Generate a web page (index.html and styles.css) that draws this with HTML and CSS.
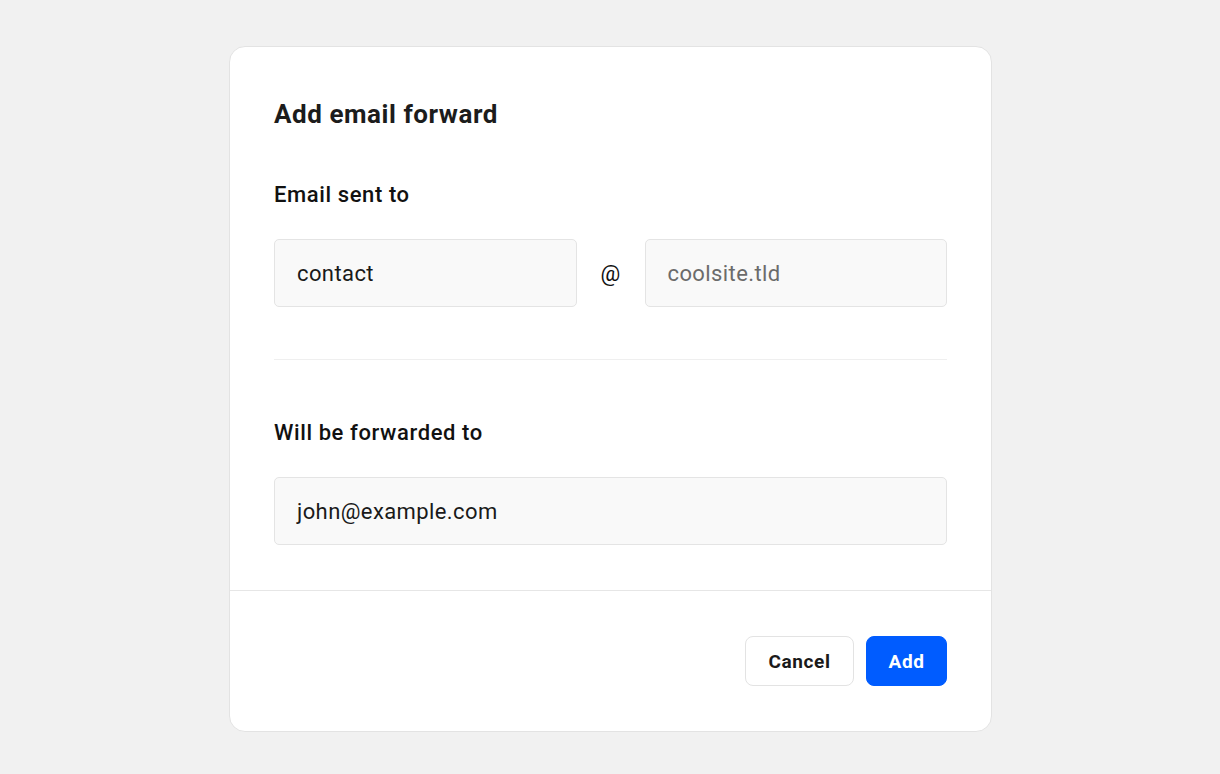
FILE: index.html
```html
<!DOCTYPE html>
<html lang="en">
<head>
<meta charset="utf-8">
<title>Add email forward</title>
<link rel="stylesheet" href="styles.css">
</head>
<body>
<main class="page">
  <section class="dialog">
    <div class="dialog-body">
      <h1 class="title">Add email forward</h1>
      <div class="group">
        <h2 class="label">Email sent to</h2>
        <div class="address-row">
          <div class="field">contact</div>
          <span class="at">@</span>
          <div class="field placeholder">coolsite.tld</div>
        </div>
      </div>
      <hr class="sep">
      <div class="group group-second">
        <h2 class="label">Will be forwarded to</h2>
        <div class="field">john@example.com</div>
      </div>
    </div>
    <footer class="dialog-footer">
      <button class="btn btn-secondary">Cancel</button>
      <button class="btn btn-primary">Add</button>
    </footer>
  </section>
</main>
</body>
</html>
```

FILE: styles.css
```css
* { box-sizing: border-box; }
html, body { margin: 0; padding: 0; }
body {
  background: #f1f1f1;
  font-family: Roboto, "Liberation Sans", Arial, sans-serif;
  color: #1a1a1a;
}
.page {
  display: flex;
  justify-content: center;
  padding: 46px 0 0 1px;
}
.dialog {
  width: 763px;
  background: #fff;
  border: 1px solid #e3e3e3;
  border-radius: 16px;
}
.dialog-body {
  padding: 51px 44px 45px;
}
.title {
  margin: 0;
  font-size: 26px;
  line-height: 32px;
  font-weight: 700;
  letter-spacing: 0.55px;
  color: #1c1c1c;
}
.group { margin-top: 51px; }
.label {
  margin: 0 0 30px;
  font-size: 22px;
  line-height: 28px;
  font-weight: 500;
  letter-spacing: 0.6px;
  color: #111;
}
.address-row {
  display: grid;
  grid-template-columns: 1fr auto 1fr;
  align-items: center;
  column-gap: 24px;
}
.at {
  font-size: 22px;
  color: #111;
  width: 20px;
  text-align: center;
}
.field {
  height: 68px;
  display: flex;
  align-items: center;
  padding: 0 22px;
  background: #f9f9f9;
  border: 1px solid #e4e4e4;
  border-radius: 5px;
  font-size: 22px;
  letter-spacing: 0.4px;
  color: #1a1a1a;
}
.placeholder { color: #6b6b6b; }
.sep {
  margin: 52px 0 0;
  border: 0;
  border-top: 1px solid #efefef;
}
.group-second { margin-top: 59px; }
.dialog-footer {
  border-top: 1px solid #e6e6e6;
  padding: 45px 44px 45px;
  display: flex;
  justify-content: flex-end;
  gap: 12px;
}
.btn {
  font-family: inherit;
  font-size: 19px;
  font-weight: 700;
  letter-spacing: 0.6px;
  height: 50px;
  border-radius: 8px;
  cursor: pointer;
}
.btn-secondary {
  width: 109px;
  background: #fff;
  border: 1px solid #e3e3e3;
  color: #1a1a1a;
}
.btn-primary {
  width: 81px;
  background: #005cff;
  border: 1px solid #005cff;
  color: #fff;
}
```
